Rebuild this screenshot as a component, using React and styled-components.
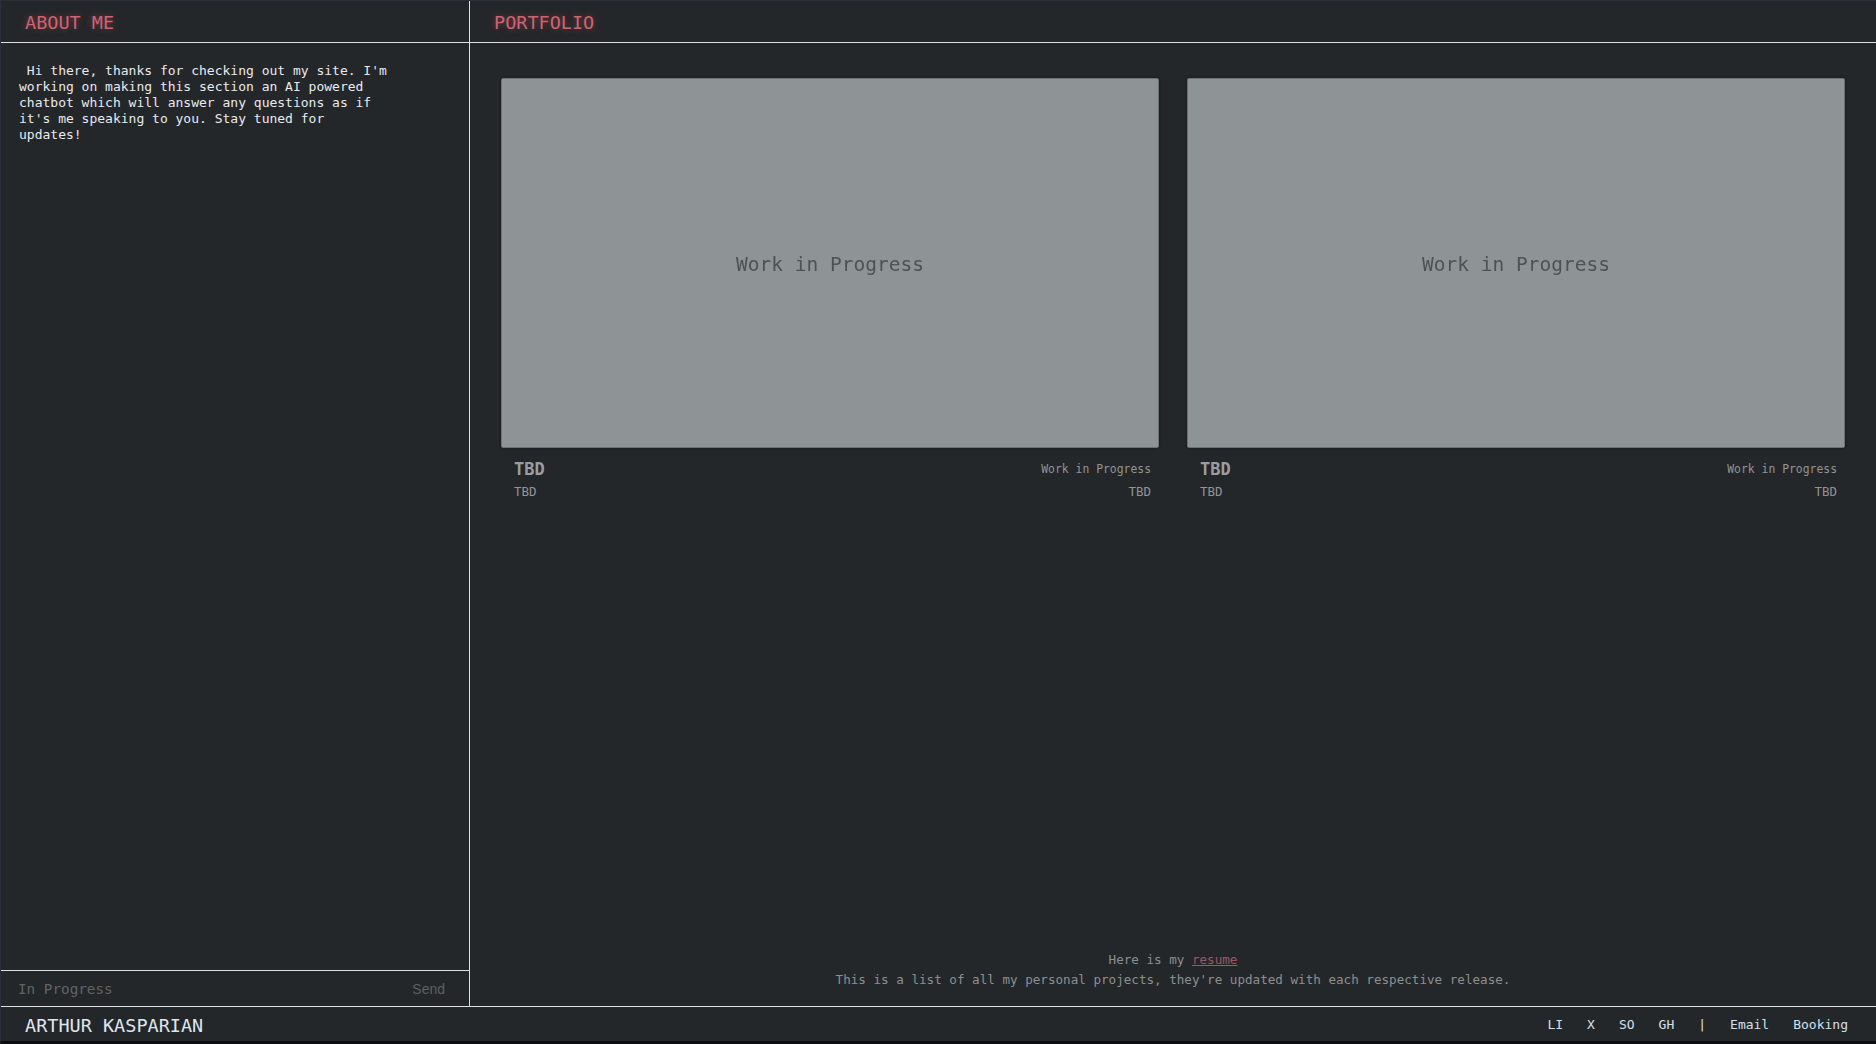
import styled, { createGlobalStyle } from "styled-components";

const Mono = `"DejaVu Sans Mono", "Liberation Mono", monospace`;

const GlobalStyle = createGlobalStyle`
  html, body {
    margin: 0;
    padding: 0;
    background-color: #242729;
  }
  * {
    box-sizing: border-box;
  }
`;

const projects = [
  { title: "TBD", status: "Work in Progress", tech: "TBD", date: "TBD" },
  { title: "TBD", status: "Work in Progress", tech: "TBD", date: "TBD" },
];

const links = ["LI", "X", "SO", "GH", "|", "Email", "Booking"];

const App = () => {
  return (
    <>
      <GlobalStyle />
      <Page>
        <Main>
          <AboutPanel>
            <PanelHeader>
              <Title>ABOUT ME</Title>
            </PanelHeader>
            <ChatBody>
              <ChatText>
                {" Hi there, thanks for checking out my site. I'm working on making this section an AI powered chatbot which will answer any questions as if it's me speaking to you. Stay tuned for updates!"}
              </ChatText>
            </ChatBody>
            <ChatInputBar>
              <ChatInput placeholder="In Progress" disabled />
              <SendButton disabled>Send</SendButton>
            </ChatInputBar>
          </AboutPanel>

          <PortfolioPanel>
            <PanelHeader>
              <Title>PORTFOLIO</Title>
            </PanelHeader>
            <PortfolioBody>
              <CardGrid>
                {projects.map((p, i) => (
                  <Card key={i}>
                    <Preview>
                      <PreviewText>Work in Progress</PreviewText>
                    </Preview>
                    <Meta>
                      <MetaRow>
                        <ProjectTitle>{p.title}</ProjectTitle>
                        <Status>{p.status}</Status>
                      </MetaRow>
                      <MetaRow>
                        <Detail>{p.tech}</Detail>
                        <Detail>{p.date}</Detail>
                      </MetaRow>
                    </Meta>
                  </Card>
                ))}
              </CardGrid>
              <Notes>
                <Note>
                  Here is my <ResumeLink href="#">resume</ResumeLink>
                </Note>
                <Note>
                  This is a list of all my personal projects, they're updated
                  with each respective release.
                </Note>
              </Notes>
            </PortfolioBody>
          </PortfolioPanel>
        </Main>

        <Footer>
          <Name>ARTHUR KASPARIAN</Name>
          <LinkList>
            {links.map((l) => (
              <FooterLink key={l} $divider={l === "|"}>
                {l}
              </FooterLink>
            ))}
          </LinkList>
        </Footer>
      </Page>
    </>
  );
};

const Page = styled.div`
  height: 100vh;
  display: flex;
  flex-direction: column;
  border-top: 1px solid #2b2d3b;
  border-left: 1px solid #2c2f3a;
  border-bottom: 3px solid #0c0d0e;
  background-color: #242729;
  font-family: ${Mono};
`;

const Main = styled.div`
  flex: 1;
  display: flex;
  min-height: 0;
`;

const AboutPanel = styled.section`
  width: 469px;
  flex-shrink: 0;
  display: flex;
  flex-direction: column;
  border-right: 1px solid #e0e0e0;
`;

const PortfolioPanel = styled.section`
  flex: 1;
  display: flex;
  flex-direction: column;
`;

const PanelHeader = styled.header`
  height: 42px;
  flex-shrink: 0;
  display: flex;
  align-items: center;
  padding: 2px 24px 0;
  border-bottom: 1px solid #e0e0e0;
`;

const Title = styled.h2`
  margin: 0;
  font-family: ${Mono};
  font-weight: normal;
  font-size: 18.5px;
  color: #cc6474;
  text-shadow: 0 0 6px rgba(210, 80, 100, 0.5);
`;

const ChatBody = styled.div`
  flex: 1;
  padding: 20px 18px;
`;

const ChatText = styled.p`
  margin: 0;
  max-width: 372px;
  white-space: pre-wrap;
  font-size: 13px;
  line-height: 16px;
  color: #e8eaf0;
`;

const ChatInputBar = styled.div`
  height: 36px;
  display: flex;
  align-items: center;
  padding: 0 24px 0 17px;
  border-top: 1px solid #e0e0e0;
`;

const ChatInput = styled.input`
  flex: 1;
  background: transparent;
  border: none;
  outline: none;
  padding: 0;
  font-family: ${Mono};
  font-size: 14.3px;
  color: #d0d0d0;

  &::placeholder {
    color: #5f6466;
  }
`;

const SendButton = styled.button`
  background: transparent;
  border: none;
  padding: 0;
  font-family: "Liberation Sans", Arial, sans-serif;
  font-size: 14px;
  color: #5c6062;
`;

const PortfolioBody = styled.div`
  flex: 1;
  display: flex;
  flex-direction: column;
  justify-content: space-between;
  padding: 35px 31px 16px;
`;

const CardGrid = styled.div`
  display: grid;
  grid-template-columns: 1fr 1fr;
  gap: 28px;
`;

const Card = styled.article`
  display: flex;
  flex-direction: column;
`;

const Preview = styled.div`
  height: 370px;
  display: flex;
  align-items: center;
  justify-content: center;
  background-color: #8e9396;
  border: 1px solid #6d7173;
  border-radius: 2px;
  box-shadow: 0 0 3px rgba(0, 0, 0, 0.45);
`;

const PreviewText = styled.span`
  font-size: 19.5px;
  color: #4e5254;
  filter: blur(0.5px);
  padding-top: 2px;
`;

const Meta = styled.div`
  display: flex;
  flex-direction: column;
  gap: 2px;
  padding: 11px 8px 0 13px;
`;

const MetaRow = styled.div`
  display: flex;
  justify-content: space-between;
  align-items: center;
  height: 20px;
`;

const ProjectTitle = styled.span`
  font-size: 17px;
  font-weight: bold;
  color: #9b9ea0;
`;

const Status = styled.span`
  font-size: 11.4px;
  color: #909496;
`;

const Detail = styled.span`
  font-size: 12.5px;
  color: #909496;
`;

const Notes = styled.div`
  display: flex;
  flex-direction: column;
  align-items: center;
`;

const Note = styled.p`
  margin: 0;
  font-size: 12.6px;
  line-height: 20px;
  color: #8b8f91;
`;

const ResumeLink = styled.a`
  color: #935c66;
  text-decoration: underline;
`;

const Footer = styled.footer`
  height: 35px;
  flex-shrink: 0;
  display: flex;
  align-items: center;
  justify-content: space-between;
  padding: 0 28px 0 24px;
  border-top: 1px solid #e0e0e0;
`;

const Name = styled.span`
  font-size: 18.5px;
  color: #dfe6f0;
  padding-top: 3px;
`;

const LinkList = styled.nav`
  display: flex;
  gap: 24px;
  padding-top: 1px;
`;

const FooterLink = styled.a`
  font-size: 13px;
  color: ${(props) => (props.$divider ? "#d8e2ee" : "#d2e0ee")};
  text-decoration: none;
  cursor: ${(props) => (props.$divider ? "default" : "pointer")};
`;

export default App;
